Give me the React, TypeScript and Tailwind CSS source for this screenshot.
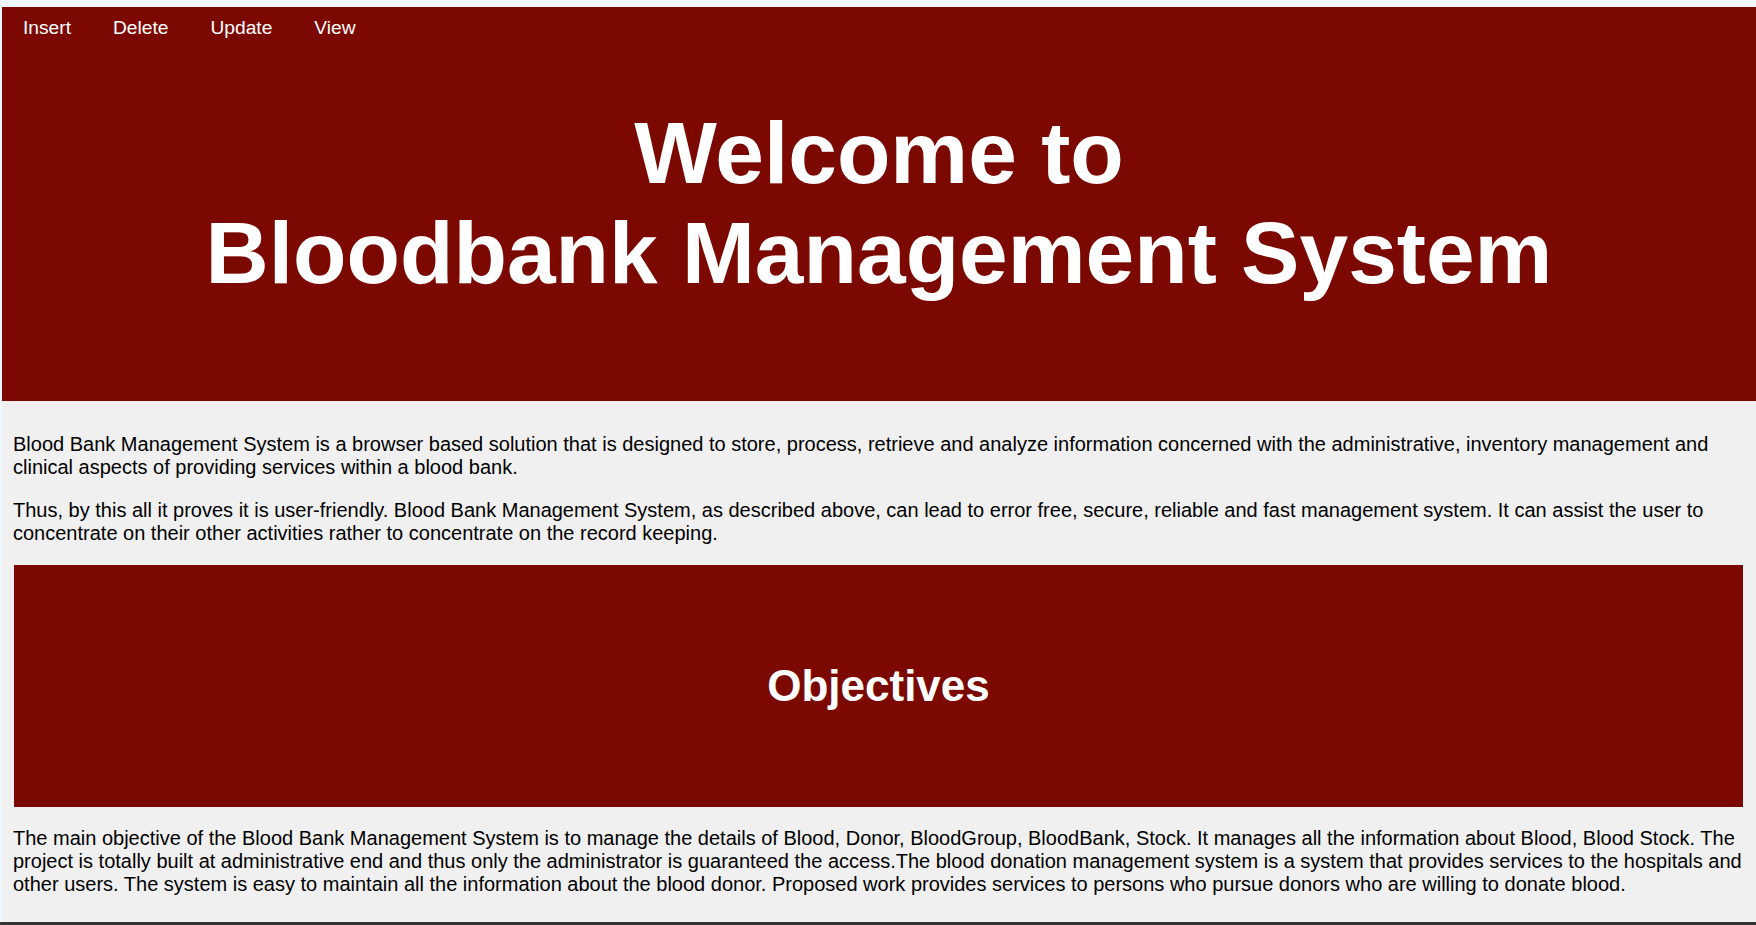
import React from "react";

export default function App() {
  const font = { fontFamily: '"Liberation Sans", Arial, sans-serif' };
  return (
    <div
      className="w-[1756px] h-[925px] bg-[#f0f8ff] flex flex-col overflow-hidden"
      style={font}
    >
      <div className="flex-1 mt-[7px] ml-[2px] bg-[#f0f0f0] flex flex-col">
        <header className="bg-[#7b0902] text-white flex flex-col">
          <nav className="flex pt-[10px]">
            {["Insert", "Delete", "Update", "View"].map((t) => (
              <a
                key={t}
                className="px-[21px] text-[19.2px] leading-[22px] text-white"
              >
                {t}
              </a>
            ))}
          </nav>
          <h1 className="mt-[64px] mb-[98px] text-center font-bold text-[87.5px] leading-[100px]">
            Welcome to
            <br />
            Bloodbank Management System
          </h1>
        </header>
        <main className="pl-[11px] pr-[13px] pt-[32px] text-[20px] leading-[23px] text-black">
          <p>
            Blood Bank Management System is a browser based solution that is
            designed to store, process, retrieve and analyze information
            concerned with the administrative, inventory management and clinical
            aspects of providing services within a blood bank.
          </p>
          <p className="mt-[20px]">
            Thus, by this all it proves it is user-friendly. Blood Bank
            Management System, as described above, can lead to error free,
            secure, reliable and fast management system. It can assist the user
            to concentrate on their other activities rather to concentrate on
            the record keeping.
          </p>
          <section className="mt-[20px] ml-[1px] h-[242px] bg-[#7b0902] flex items-center justify-center">
            <h2 className="text-white font-bold text-[44px] leading-[50px]">
              Objectives
            </h2>
          </section>
          <p className="mt-[20px]">
            The main objective of the Blood Bank Management System is to manage
            the details of Blood, Donor, BloodGroup, BloodBank, Stock. It
            manages all the information about Blood, Blood Stock. The project is
            totally built at administrative end and thus only the administrator
            is guaranteed the access.The blood donation management system is a
            system that provides services to the hospitals and other users. The
            system is easy to maintain all the information about the blood
            donor. Proposed work provides services to persons who pursue donors
            who are willing to donate blood.
          </p>
        </main>
      </div>
      <div className="h-[3px] bg-[#333333]" />
    </div>
  );
}
